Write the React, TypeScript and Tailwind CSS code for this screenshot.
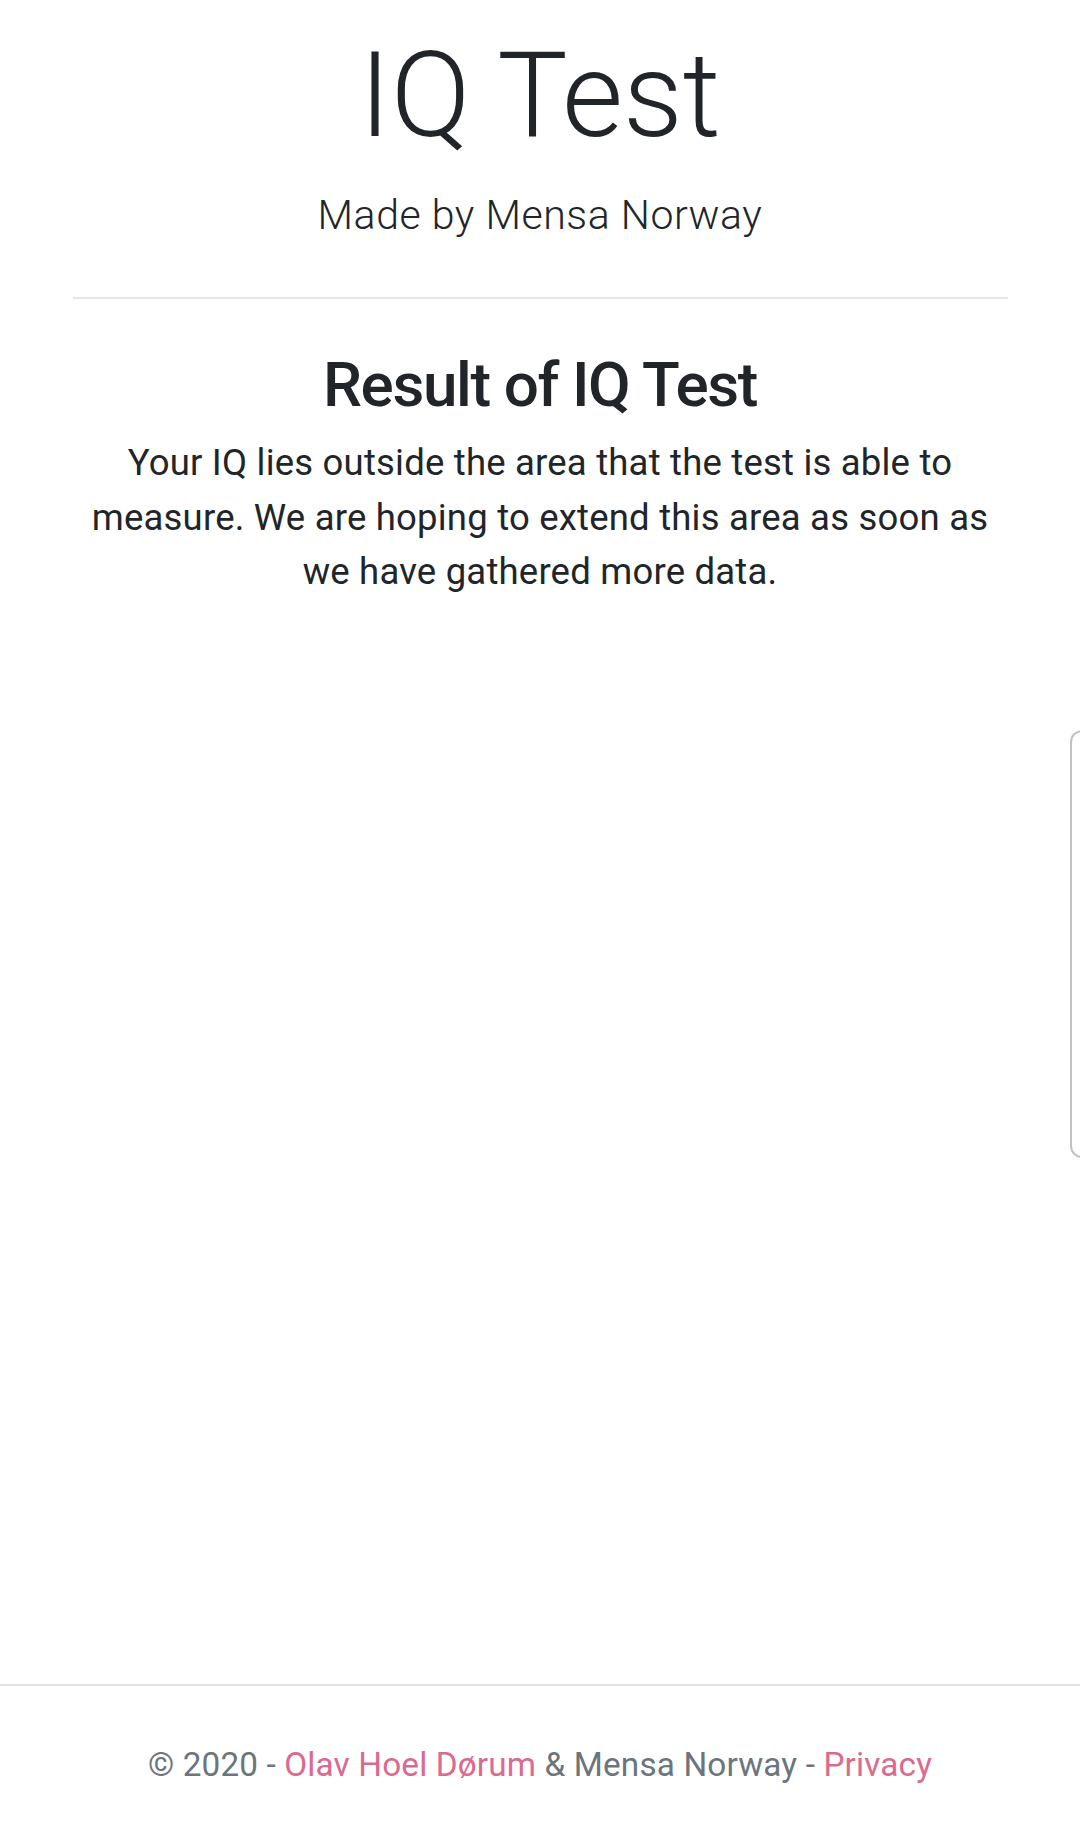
import React from "react";

export default function App() {
  return (
    <div
      className="relative flex h-[1843px] w-full flex-col overflow-hidden bg-white text-[#212529]"
      style={{ fontFamily: "Roboto, 'Liberation Sans', sans-serif" }}
    >
      <main className="flex flex-1 flex-col items-center">
        <div className="flex w-[935px] flex-col items-center text-center">
          <h1 className="mt-[25px] text-[118px] font-light leading-[142px]">IQ Test</h1>
          <p className="mt-[17px] text-[41px] font-light leading-[62px] tracking-[0.55px]">Made by Mensa Norway</p>
          <hr className="mt-[51px] w-full border-0 border-t-2 border-[#e6e6e6]" />
          <h2 className="mt-[49px] text-[62px] font-medium leading-[74px] tracking-[-1.4px]">Result of IQ Test</h2>
          <p className="mt-[14px] text-[36.5px] font-normal leading-[54.7px] tracking-[0.2px]">
            Your IQ lies outside the area that the test is able to measure. We are hoping to extend this area as soon as we have gathered more data.
          </p>
        </div>
      </main>
      <footer className="border-t-2 border-[#dee2e6] pt-[54px] pb-[53px] text-center text-[33.3px] leading-[50px] tracking-[0.15px] text-[#6c757d]">
        © 2020 - <a className="text-[#db6a8f]" href="#">Olav Hoel Dørum</a> &amp; Mensa Norway -{" "}
        <a className="text-[#db6a8f]" href="#">Privacy</a>
      </footer>
      <div className="absolute left-[1070px] top-[730px] h-[428px] w-[40px] rounded-l-[12px] border-2 border-r-0 border-[#c2c2c2] bg-white" />
    </div>
  );
}
